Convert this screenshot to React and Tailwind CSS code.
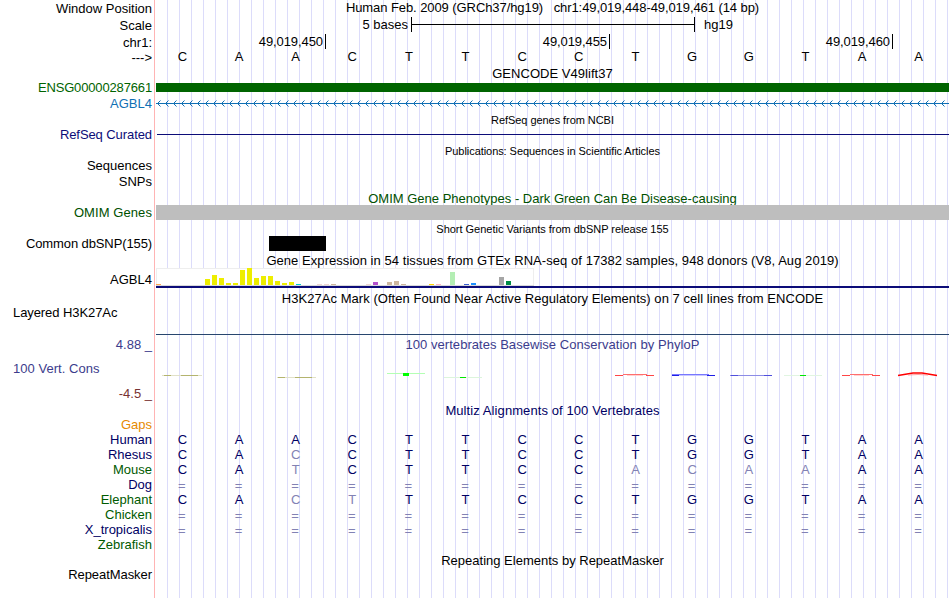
import clsx from 'clsx';

const LABELS = [
  { text: 'Window Position', row: 'h-[17px]' },
  { text: 'Scale', row: 'h-[17px]' },
  { text: 'chr1:', row: 'h-[15px]' },
  { text: '--->', row: 'h-[30px]' },
  { text: 'ENSG00000287661', row: 'h-4 text-[#006400] tracking-[-0.15px]' },
  { text: 'AGBL4', row: 'h-[31px] text-[#1070b4]' },
  { text: 'RefSeq Curated', row: 'h-[31px] text-[#0c0c78] tracking-[-0.08px]' },
  { text: 'Sequences', row: 'h-4' },
  { text: 'SNPs', row: 'h-[31px]' },
  { text: 'OMIM Genes', row: 'h-[31px] text-[#005000] tracking-[0.08px]' },
  { text: 'Common dbSNP(155)', row: 'h-9 tracking-[-0.11px]' },
  { text: 'AGBL4', row: 'h-[33px]' },
  { text: 'Layered H3K27Ac', row: 'h-8 tracking-[-0.08px]', left: true },
  { text: '4.88 _', row: 'h-6 text-[#3c3c8c]' },
  { text: '100 Vert. Cons', row: 'h-[25px] text-[#3c3c8c] tracking-[0.04px]', left: true },
  { text: '-4.5 _', row: 'h-[31px] text-[#783232]' },
  { text: 'Gaps', row: 'h-[15px] text-[#e68a00]' },
  { text: 'Human', row: 'h-[15px] text-[#000064]' },
  { text: 'Rhesus', row: 'h-[15px] text-[#000064]' },
  { text: 'Mouse', row: 'h-[15px] text-[#005a00]' },
  { text: 'Dog', row: 'h-[15px] text-[#000064]' },
  { text: 'Elephant', row: 'h-[15px] text-[#005a00]' },
  { text: 'Chicken', row: 'h-[15px] text-[#005a00]' },
  { text: 'X_tropicalis', row: 'h-[15px] text-[#000064]' },
  { text: 'Zebrafish', row: 'h-[30px] text-[#005a00]' },
  { text: 'RepeatMasker', row: 'h-[31px] tracking-[-0.06px]' },
];

const REFERENCE = 'CAACTTCCTGGTAA';

// lower case = mismatch with human, drawn faded
const ALIGNMENTS = [
  { species: 'Human', bases: 'CAACTTCCTGGTAA' },
  { species: 'Rhesus', bases: 'CAcCTTCCTGGTAA' },
  { species: 'Mouse', bases: 'CAtCTTCCacaaAA' },
  { species: 'Dog', bases: '==============' },
  { species: 'Elephant', bases: 'CActTTCCTGGTAA' },
  { species: 'Chicken', bases: '==============' },
  { species: 'X_tropicalis', bases: '==============' },
];

// [tissue index, height, fill]
const GTEX = [
  [0, 1, '#ffa54f'],
  [7, 6, '#eeee00'],
  [8, 10, '#eeee00'],
  [9, 7, '#eeee00'],
  [10, 2, '#eeee00'],
  [11, 2, '#eeee00'],
  [12, 15, '#eeee00'],
  [13, 17, '#eeee00'],
  [14, 7, '#eeee00'],
  [15, 9, '#eeee00'],
  [16, 9, '#eeee00'],
  [17, 4, '#eeee00'],
  [18, 2, '#eeee00'],
  [19, 3, '#eeee00'],
  [20, 1, '#00cdcd'],
  [23, 1, '#eed5d2'],
  [24, 1, '#eed5d2'],
  [25, 1, '#cdb79e'],
  [30, 1, '#eed5d2'],
  [31, 3, '#b452cd'],
  [33, 3, '#cdb79e'],
  [34, 4, '#cdb79e'],
  [35, 1, '#cdb79e'],
  [39, 1, '#ffd700'],
  [40, 1, '#ffb6c1'],
  [42, 13, '#b4eeb4'],
  [44, 1, '#3a5fcd'],
  [45, 2, '#1e90ff'],
  [49, 8, '#a6a6a6'],
  [50, 4, '#008b45'],
];

function Title({ children, className }) {
  return (
    <div className={clsx('flex justify-center whitespace-pre', className)}>
      <span>{children}</span>
    </div>
  );
}

function BaseRow({ bases, className }) {
  return (
    <div className={clsx('-ml-0.5 grid h-[15px] w-[793px] grid-cols-14 text-center', className)}>
      {[...bases].map((b, i) => {
        const gap = b === '=';
        const faded = gap || b !== b.toUpperCase();
        return (
          <span key={i} className={clsx(faded && 'text-[#8282b4]', gap && 'pt-px pr-px')}>
            {b.toUpperCase()}
          </span>
        );
      })}
    </div>
  );
}

function Ruler() {
  return (
    <>
      <div className="flex h-[15px]">
        <span className="w-[255px] pr-[3px] text-right">5 bases</span>
        <div className="flex w-[284px] items-center border-x border-black">
          <div className="h-px w-full bg-black" />
        </div>
        <span className="ml-[9px]">hg19</span>
      </div>
      <div className="mt-0.5 flex h-[15px] text-right tracking-[-0.08px]">
        <span className="w-[170px] border-r border-black pr-0.5">49,019,450</span>
        <span className="w-[284px] border-r border-black pr-0.5">49,019,455</span>
        <span className="w-[283px] border-r border-black pr-0.5">49,019,460</span>
      </div>
    </>
  );
}

function Intron() {
  const arrows = Array.from({ length: 99 }, (_, i) => 1 + i * 8);
  return (
    <svg className="mt-2 block" width="793" height="7" shapeRendering="crispEdges" fill="#1070b4">
      <rect x="0" y="3" width="793" height="1" />
      {arrows.map((x) => (
        <g key={x}>
          <rect x={x + 1} y="2" width="1" height="3" />
          <rect x={x + 2} y="1" width="1" height="1" />
          <rect x={x + 2} y="5" width="1" height="1" />
          <rect x={x + 3} y="0" width="1" height="1" opacity=".5" />
          <rect x={x + 3} y="6" width="1" height="1" opacity=".5" />
        </g>
      ))}
    </svg>
  );
}

function Expression() {
  return (
    <div className="h-5 border-b-2 border-[#0c0c78]">
      <svg className="block" width="378" height="18" shapeRendering="crispEdges">
        <rect width="378" height="18" fill="#eeeeee" />
        <rect x="1" y="1" width="376" height="16" fill="#ffffff" />
        <rect y="17" width="378" height="1" fill="#d9d9d9" />
        {GTEX.map(([i, h, fill]) => (
          <rect key={i} x={i * 7} y={17 - h} width="5" height={h} fill={fill} />
        ))}
      </svg>
    </div>
  );
}

function Conservation() {
  return (
    <svg className="block" width="793" height="51" fill="none">
      <path d="M6 23.5H46" stroke="#e1e1c8" />
      <path d="M8 23.5H15M25 23.5H42" stroke="#b4b46e" />
      <path d="M121 25.5H160" stroke="#e1e1c8" />
      <path d="M122 25.5H129M139 25.5H156" stroke="#b4b46e" />
      <path d="M231 21.5H269" stroke="#b4ffb4" />
      <path d="M247 22.5H253" stroke="#00ff00" strokeWidth="3" />
      <path d="M288 25.5H326" stroke="#dcf5dc" />
      <path d="M304 25.5H310" stroke="#00e600" />
      <path d="M459 23.5H467M490 23.5H498" stroke="#ff4646" />
      <path d="M467 22.5H491" stroke="#ff6e6e" />
      <path d="M471 23.5H487" stroke="#ffd2d2" />
      <path d="M516 22.5H553" stroke="#7878ff" />
      <path d="M516 23.5H523M551 23.5H559" stroke="#1e1ee6" />
      <path d="M523 23.5H551" stroke="#c8c8ff" />
      <path d="M574 23.5H616" stroke="#8c8ce6" />
      <path d="M575 23.5H582M608 23.5H616" stroke="#5050dc" />
      <path d="M628 23.5H666" stroke="#e1f5e1" />
      <path d="M644 23.5H650" stroke="#00e600" />
      <path d="M686 23.5H694M716 23.5H724" stroke="#ff4646" />
      <path d="M694 22.5H717" stroke="#ff6e6e" />
      <path d="M698 23.5H713" stroke="#ffd2d2" />
      <path d="M742 23.5L757 21H766L781 23.5" stroke="#ff0000" strokeWidth="1.6" />
      <path d="M752 23L762 22.5L772 23" stroke="#ff7878" strokeWidth=".7" />
    </svg>
  );
}

export default function App() {
  return (
    <div className="flex h-[598px] w-[950px] overflow-hidden bg-white font-['Liberation_Sans',Arial,sans-serif] text-[13px] leading-[15px] text-black">
      <div className="flex w-[155px] shrink-0 flex-col border-r border-[#ffb4b4] pt-px">
        {LABELS.map(({ text, row, left }, i) => (
          <div key={i} className={clsx('shrink-0 whitespace-pre', left ? 'pl-[13px]' : 'pr-0.5 text-right', row)}>
            {text}
          </div>
        ))}
      </div>

      <div className="ml-px w-[793px] shrink-0 bg-[repeating-linear-gradient(to_right,transparent_0_11px,#dcdcfa_11px_12px)]">
        <Title className="h-[17px] tracking-[-0.08px]">
          Human Feb. 2009 (GRCh37/hg19)   chr1:49,019,448-49,019,461 (14 bp)
        </Title>
        <Ruler />
        <BaseRow bases={REFERENCE} />

        <Title className="mt-0.5 h-[17px] tracking-[0.04px]">GENCODE V49lift37</Title>
        <div className="h-[9px] bg-[#006400]" />
        <Intron />

        <Title className="mt-[7px] h-5 text-[11px] leading-3 tracking-[-0.06px]">RefSeq genes from NCBI</Title>
        <div className="ml-px h-px bg-[#0c0c78]" />

        <Title className="mt-2.5 h-[46px] text-[11px] leading-3 tracking-[-0.06px]">
          Publications: Sequences in Scientific Articles
        </Title>

        <Title className="h-3.5 overflow-hidden text-[#005000]">
          OMIM Gene Phenotypes - Dark Green Can Be Disease-causing
        </Title>
        <div className="h-[15px] bg-[#bebebe]" />

        <Title className="mt-[3px] h-[13px] text-[11px] leading-3 tracking-[-0.02px]">
          Short Genetic Variants from dbSNP release 155
        </Title>
        <div className="ml-[113px] h-[15px] w-[57px] bg-black" />

        <Title className="mt-0.5 h-[15px] tracking-[0.055px]">
          Gene Expression in 54 tissues from GTEx RNA-seq of 17382 samples, 948 donors (V8, Aug 2019)
        </Title>
        <Expression />

        <Title className="mt-[3px] h-[43px] tracking-[0.045px]">
          H3K27Ac Mark (Often Found Near Active Regulatory Elements) on 7 cell lines from ENCODE
        </Title>
        <div className="h-px bg-[#28466e]" />

        <Title className="mt-0.5 h-[15px] text-[#3c3c8c] tracking-[0.04px]">
          100 vertebrates Basewise Conservation by PhyloP
        </Title>
        <Conservation />

        <Title className="h-[29px] text-[#000064] tracking-[0.09px]">Multiz Alignments of 100 Vertebrates</Title>
        {ALIGNMENTS.map(({ species, bases }) => (
          <BaseRow key={species} bases={bases} className="text-[#000064]" />
        ))}

        <Title className="mt-4">Repeating Elements by RepeatMasker</Title>
        <div className="h-[30px]" />
      </div>
    </div>
  );
}
